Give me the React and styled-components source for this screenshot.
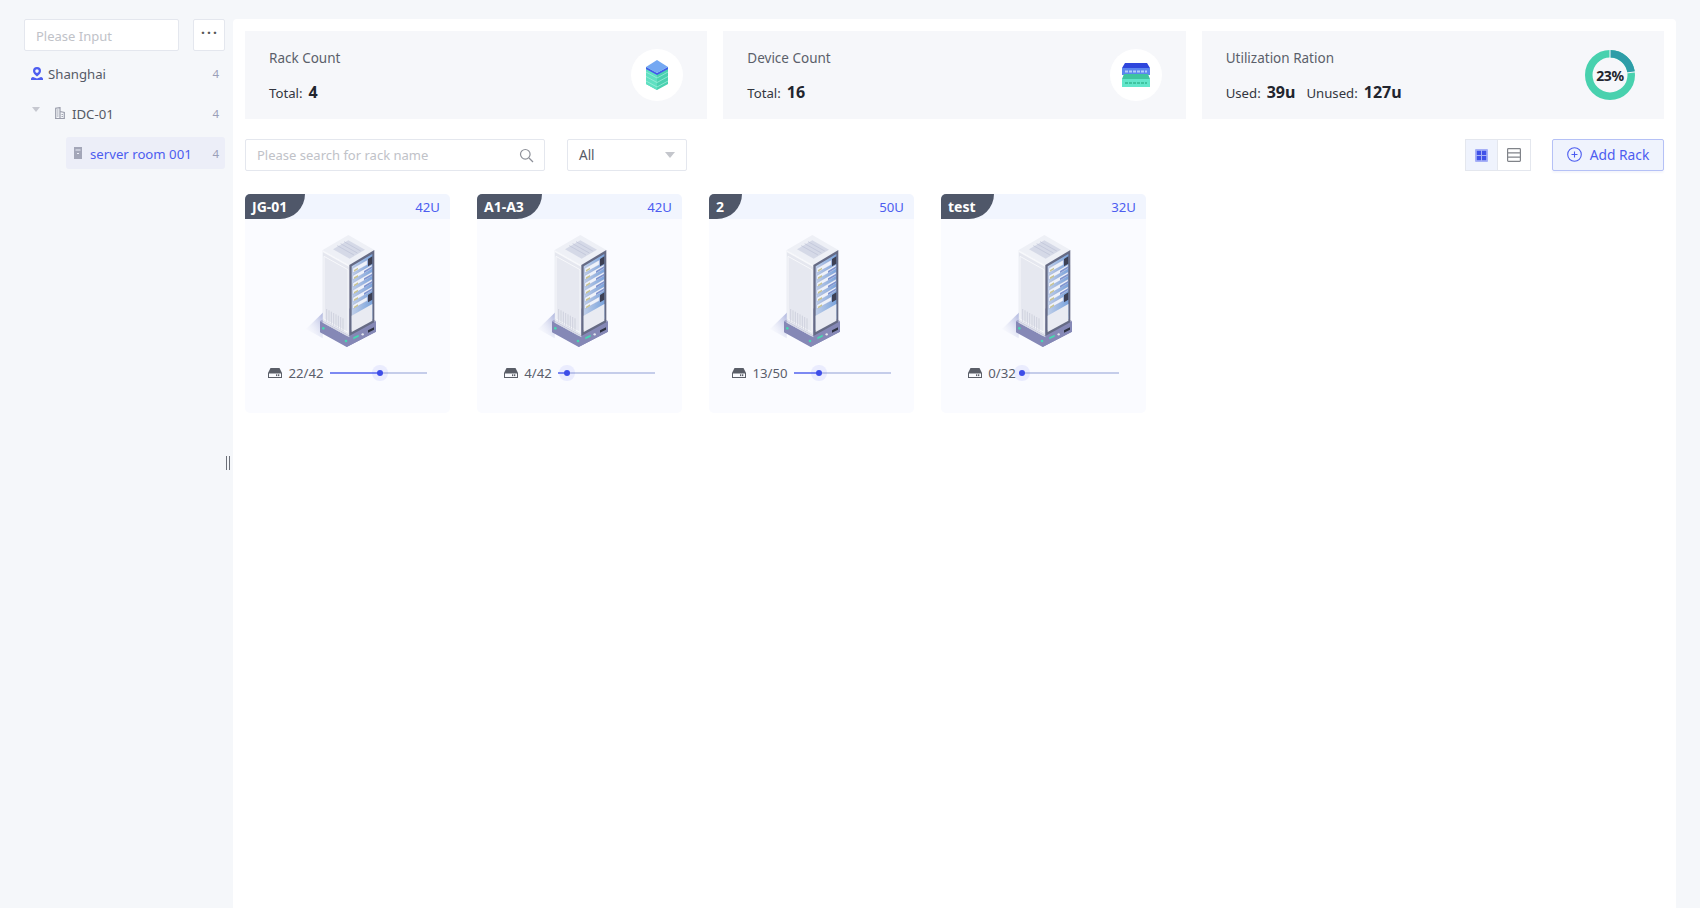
import React from 'react';
import styled, { createGlobalStyle } from 'styled-components';

const Global = createGlobalStyle`
  html, body { margin: 0; padding: 0; height: 100%; background: #f5f7fa; }
  body { font-family: "Noto Sans", "Open Sans", sans-serif; font-size: 13.2px; color: #555a66; }
  #root { height: 908px; }
  * { box-sizing: border-box; }
`;

const Page = styled.div`
  display: flex; height: 908px; width: 1700px; padding-top: 19px; background: #f5f7fa; overflow: hidden;
`;
const Side = styled.aside`
  width: 233px; flex: none; padding-left: 24px; padding-right: 8px; position: relative;
`;
const SideTop = styled.div`display: flex; gap: 14px; margin-bottom: 6px;`;
const FieldBox = styled.div`
  flex: 1; height: 32px; background: #fff; border: 1px solid #e4e7ee; border-radius: 2px;
  padding: 1px 11px 0; display: flex; align-items: center; color: #c0c2c8; font-size: 13px;
`;
const MoreBtn = styled.button`
  width: 32px; height: 32px; padding: 0 0 5px 2px; background: #fff; border: 1px solid #e4e7ee; border-radius: 2px;
  font: 700 14px "Noto Sans", sans-serif; color: #555; letter-spacing: 2px; display: flex; align-items: center; justify-content: center;
`;
const Row = styled.div`
  height: 32px; margin-top: ${p => p.$mt || 0}px; margin-left: ${p => p.$ml || 0}px; padding-left: ${p => p.$pl || 0}px; padding-right: 6px;
  display: flex; align-items: center; border-radius: 3px;
  background: ${p => (p.$active ? '#eceef8' : 'transparent')};
  color: ${p => (p.$active ? '#4d5df0' : '#555a66')}; font-size: 13.2px;
`;
const RowName = styled.span`flex: 1; margin-left: ${p => p.$ml}px; padding-top: 1px;`;
const Count = styled.span`font-size: 11.500px; color: #9a9fb8;`;
const Caret = styled.span`
  width: 0; height: 0; border-left: 4px solid transparent; border-right: 4px solid transparent; border-top: 5px solid #c6c8d0;
  margin-right: 15px; margin-top: -8px;
`;
const Handle = styled.span`
  position: absolute; left: 226px; top: 437px; width: 4px; height: 14px; border-left: 1px solid #6c7078; border-right: 1px solid #6c7078;
`;
const Main = styled.main`
  width: 1443px; flex: none; background: #fff; padding: 12px 12px 0; height: 889px; border-radius: 4px 4px 0 0;
`;
const Stats = styled.section`display: grid; grid-template-columns: repeat(3, 1fr); gap: 16px;`;
const Stat = styled.div`
  height: 88px; background: #f6f7fa; padding: 17px 24px 0; display: flex; justify-content: space-between; position: relative;
`;
const StatTitle = styled.div`color: #5b5f6a; font-size: 13.500px; line-height: 20px;`;
const StatLine = styled.div`display: flex; align-items: baseline; margin-top: 14px; line-height: 20px; color: #333640;`;
const StatLabel = styled.span`font-size: 13.200px; margin-right: 6px; margin-left: ${p => p.$ml || 0}px;`;
const StatValue = styled.b`font-size: 16px; font-weight: 700; color: #22252e;`;
const IconCircle = styled.div`
  width: 52px; height: 52px; border-radius: 50%; background: #fff; margin-top: 1px;
  display: flex; align-items: center; justify-content: center;
`;
const Donut = styled.div`position: relative; width: 50px; height: 50px; margin-top: 2px; margin-right: 5px;`;
const DonutText = styled.span`
  position: absolute; inset: 0; display: flex; align-items: center; justify-content: center;
  font-size: 14px; font-weight: 700; color: #22252e; letter-spacing: -0.3px;
`;
const Toolbar = styled.div`display: flex; align-items: center; margin-top: 20px; height: 32px;`;
const Search = styled.div`
  width: 300px; height: 32px; border: 1px solid #e4e7ee; border-radius: 2px; padding: 0 10px 0 11px;
  display: flex; align-items: center; justify-content: space-between; color: #c0c2c8; font-size: 13px;
`;
const Select = styled.div`
  width: 120px; height: 32px; margin-left: 22px; border: 1px solid #e4e7ee; border-radius: 2px; padding: 0 11px;
  display: flex; align-items: center; justify-content: space-between; color: #555a66; font-size: 13.500px;
`;
const SelectCaret = styled.span`
  width: 0; height: 0; border-left: 5px solid transparent; border-right: 5px solid transparent; border-top: 6px solid #c4c6cc;
`;
const Spacer = styled.div`flex: 1;`;
const Toggle = styled.div`display: flex; height: 32px; border: 1px solid #e4e7ee; margin-right: 21px;`;
const ToggleBtn = styled.div`
  width: ${p => (p.$on ? 31 : 33)}px; display: flex; align-items: center; justify-content: center; background: ${p => (p.$on ? '#eff3fd' : '#fff')};
  & + & { border-left: 1px solid #e4e7ee; }
`;
const AddBtn = styled.button`
  width: 112px; height: 32px; background: #eff3fd; border: 1px solid #b5c1f6; border-radius: 2px; color: #4d5df0;
  font: 13.800px "Noto Sans", sans-serif; display: flex; align-items: center; justify-content: center; gap: 8px; padding: 0 0 1px;
  box-shadow: 0 2px 2px rgba(80, 100, 200, 0.06);
`;
const Racks = styled.section`display: flex; gap: 27px; margin-top: 23px;`;
const RackCard = styled.article`width: 205px; height: 219px; background: #fafbff; border-radius: 5px; overflow: hidden;`;
const RackHead = styled.header`
  height: 25px; background: #f1f5fe; display: flex; justify-content: space-between; align-items: center; padding-right: 10px;
  color: #4d5df0; font-size: 13.200px;
`;
const RackBadge = styled.span`
  height: 25px; padding: 0 18px 0 7px; background: #4f5769; color: #fff; font-weight: 700; font-size: 14px; line-height: 25px;
  border-bottom-right-radius: 26px;
`;
const RackFigure = styled.div`padding: 6px 0 0 55px; height: 136px;`;
const Usage = styled.div`display: flex; align-items: center; justify-content: center; height: 24px; margin-top: 6px; color: #5a5e6b; font-size: 13.200px;`;
const UsageText = styled.span`margin: 0 6px;`;
const Track = styled.div`width: 97px; height: 2px; background: #c5cdea; position: relative; flex: none;`;
const Fill = styled.div`height: 2px; background: #7c89f2;`;
const Thumb = styled.span`
  position: absolute; top: 1px; width: 6px; height: 6px; border-radius: 50%; background: #3d4de8; transform: translate(-50%, -50%);
  box-shadow: 0 0 0 5px rgba(77, 93, 240, 0.09);
`;

const PinIcon = () => (
  <svg width="12" height="13" viewBox="0 0 12 13">
    <path fill="#4d5df0" fillRule="evenodd" d="M6 0a4 4 0 0 1 4 4c0 2-2 4-4 5.500C4 8 2 6 2 4a4 4 0 0 1 4-4zm0 2.300a1.800 1.800 0 1 0 0 3.600 1.800 1.800 0 0 0 0-3.600z"/>
    <path fill="#4d5df0" d="M0 13v-1c0-1 .8-1.800 2-2l4 1.500 4-1.500c1.200.2 2 1 2 2v1z"/>
  </svg>
);
const BuildingIcon = () => (
  <svg width="10" height="12" viewBox="0 0 10 12" fill="none" stroke="#9a9dab" strokeWidth="1.200">
    <path d="M.7 11.500V1.200L5 .6v10.900M5 4.500l4.300 1v6H0"/>
    <path d="M2 3h1.500M2 5h1.500M2 7h1.500M2 9h1.500M6.500 7.500H8M6.500 9.500H8" strokeWidth=".9"/>
  </svg>
);
const RoomIcon = () => (
  <svg width="8" height="12" viewBox="0 0 8 12">
    <rect width="8" height="12" fill="#a3a6b8"/>
    <rect x="1.500" y="2.500" width="5" height="1" fill="#eceef8"/>
    <rect x="3" y="6" width="2" height="1" fill="#eceef8"/>
  </svg>
);
const SearchIcon = () => (
  <svg width="15" height="15" viewBox="0 0 15 15" fill="none" stroke="#8d9099" strokeWidth="1.200">
    <circle cx="6.300" cy="6.300" r="4.800"/><path d="M10 10l4 4"/>
  </svg>
);
const GridIcon = () => (
  <svg width="13" height="13" viewBox="0 0 13 13">
    <rect width="13" height="13" rx="1" fill="#a6b0f7"/>
    <rect x="1.800" y="1.800" width="4.200" height="4.200" fill="#3f50e8"/><rect x="7" y="1.800" width="4.200" height="4.200" fill="#3f50e8"/>
    <rect x="1.800" y="7" width="4.200" height="4.200" fill="#3f50e8"/><rect x="7" y="7" width="4.200" height="4.200" fill="#3f50e8"/>
  </svg>
);
const ListIcon = () => (
  <svg width="14" height="14" viewBox="0 0 14 14" fill="none" stroke="#808389" strokeWidth="1.200">
    <rect x=".6" y=".6" width="12.800" height="12.800" rx=".8"/><path d="M1 4.800h12M1 9.200h12"/>
  </svg>
);
const PlusCircle = () => (
  <svg width="15" height="15" viewBox="0 0 15 15" fill="none" stroke="#4d5df0" strokeWidth="1.100">
    <circle cx="7.500" cy="7.500" r="6.800"/><path d="M7.500 4.500v6M4.500 7.500h6"/>
  </svg>
);
const DiskIcon = () => (
  <svg width="14" height="10" viewBox="0 0 14 10">
    <path fill="#5a5e68" d="M2.500 0h9L14 5v5H0V5z"/>
    <rect x="1" y="5.500" width="12" height="3.500" fill="#fafbff"/>
    <rect x="8" y="6.300" width="1.300" height="1.800" fill="#5a5e68"/><rect x="10" y="6.300" width="1.300" height="1.800" fill="#5a5e68"/>
  </svg>
);
const CubeIcon = () => (
  <svg width="22" height="30" viewBox="0 0 22 30">
    <path fill="#4ad1b0" d="M0 7l11 6 11-6v17l-11 6L0 24z"/>
    <path fill="#5fe0c2" d="M0 7l11 6v17L0 24z"/>
    <path d="M0 12l11 6 11-6M0 16.500l11 6 11-6M0 21l11 6 11-6" stroke="#a6efdd" strokeWidth=".7" fill="none"/>
    <path fill="#4457ec" d="M0 7l11 6 11-6v2l-11 6-11-6z"/>
    <path fill="#74a8f2" d="M11 0l11 7-11 6L0 7z"/>
  </svg>
);
const SwitchIcon = () => (
  <svg width="28" height="24" viewBox="0 0 28 24">
    <path fill="#2f46dc" d="M3 0h22l3 5H0z"/>
    <rect y="5" width="28" height="7" fill="#5c85ef"/>
    <path stroke="#b4cdf9" strokeWidth="2" strokeDasharray="3 1" d="M3 8.500h22"/>
    <path fill="#3fc4a0" d="M2 11h24l2 5H0z"/>
    <rect y="16" width="28" height="8" fill="#62e6ca"/>
    <path stroke="#3fc4a0" strokeWidth="2" strokeDasharray="3 1" d="M3 20h22"/>
  </svg>
);
const RackArt = () => (
  <svg width="100" height="130" viewBox="0 0 300 390">
    <defs>
      <linearGradient id="shade" x1="1" y1="0" x2="0" y2="1">
        <stop offset="0" stopColor="#aab1dc"/><stop offset="1" stopColor="#fafbff" stopOpacity="0"/>
      </linearGradient>
      <linearGradient id="glass" x1="0" y1="0" x2="1" y2="0">
        <stop offset="0" stopColor="#c0cfe9"/><stop offset="1" stopColor="#7aa3dc"/>
      </linearGradient>
    </defs>
    <path fill="url(#shade)" d="M70 262L18 312l50 28z"/>
    <path fill="#8588b6" d="M60 288l80 44 88-44v32l-88 46-80-44z"/>
    <path fill="#a0a3ca" d="M60 288l80 44 88-44-84-40z"/>
    <path fill="#e5e7ef" d="M68 75l80 45v212L68 288z"/>
    <path fill="#f7f8fb" d="M68 75v6l80 45v-6z"/>
    <path fill="#e6e8f0" stroke="#f7f8fb" strokeWidth="3" d="M72 94l72 40v188l-72-40z"/>
    <path fill="#eef0f6" d="M145 30l78 45-75 45-80-45z"/>
    <path fill="#d5d9e7" d="M145 46l50 28-46 27-50-28z"/>
    <path stroke="#bcc1d6" strokeWidth="2" fill="none" d="M112 62l50 28M122 56l50 28M132 50l50 28"/>
    <path fill="#666b85" d="M148 120l75-45v220l-75 40z"/>
    <path fill="url(#glass)" d="M155 124l62-37v195l-62 34z"/>
    <g fill="#eef2fa" stroke="#8e99c4" strokeWidth="1">
      <path d="M158 130l44-25v14l-44 25z"/>
      <path d="M158 152l58-33v12l-58 33z"/>
      <path d="M158 174l58-33v12l-58 33z"/>
      <path d="M158 196l58-33v12l-58 33z"/>
      <path d="M158 218l58-33v12l-58 33z"/>
      <path d="M158 240l44-25v12l-44 25z"/>
    </g>
    <g fill="#c9c48f">
      <path d="M162 135l12-7v5l-12 7zM162 157l12-7v5l-12 7zM162 179l12-7v5l-12 7zM162 201l12-7v5l-12 7zM162 223l12-7v5l-12 7zM162 245l12-7v5l-12 7z"/>
    </g>
    <g fill="#7f94cf">
      <path d="M192 138l24-14v6l-24 14zM192 160l24-14v6l-24 14zM192 182l24-14v6l-24 14zM192 204l24-14v6l-24 14z"/>
    </g>
    <path fill="#3d4054" d="M204 102l13-8v22l-13 8zM204 210l13-8v22l-13 8z"/>
    <path fill="#e9ebf2" d="M155 272l62-35v50l-62 34z"/>
    <path fill="#8588b6" d="M148 333l75-41 5-2v30l-88 46v-33z"/>
    <path fill="#d9dbe6" d="M68 288l80 44v5l-80-44z"/>
    <path fill="#2d3040" d="M204 316l18-9v7l-18 9z"/>
    <path fill="#46d9b0" d="M160 337l16-8v6l-16 8z"/>
    <circle cx="188" cy="328" r="3.500" fill="#e4e6ee"/>
    <circle cx="70" cy="310" r="4" fill="#46d9b0"/>
    <circle cx="138" cy="348" r="4" fill="#46d9b0"/>
    <path stroke="#bfc3d2" strokeWidth="1.800" fill="none" d="M80 252v38M87 256v38M94 260v38M101 264v38M108 268v38M115 272v38M122 276v38M129 280v38"/>
  </svg>
);
const DonutArt = () => {
  const r = 21.25;
  const a = (82.8 * Math.PI) / 180;
  const x = 25 + r * Math.sin(a);
  const y = 25 - r * Math.cos(a);
  return (
    <svg width="50" height="50" viewBox="0 0 50 50" fill="none">
      <circle cx="25" cy="25" r={r} stroke="#48d1ae" strokeWidth="7.500"/>
      <path d={`M25 ${25 - r}A${r} ${r} 0 0 1 ${x} ${y}`} stroke="#2e9da8" strokeWidth="7.500"/>
      <path d="M25 0v8M42 22.900l8-1" stroke="#f6f7fa" strokeWidth="1"/>
    </svg>
  );
};

const racks = [
  { name: 'JG-01', size: '42U', used: 22, total: 42 },
  { name: 'A1-A3', size: '42U', used: 4, total: 42 },
  { name: '2', size: '50U', used: 13, total: 50 },
  { name: 'test', size: '32U', used: 0, total: 32 },
];

const Rack = ({ name, size, used, total }) => {
  const pct = (used / total) * 100;
  return (
    <RackCard>
      <RackHead><RackBadge>{name}</RackBadge><span>{size}</span></RackHead>
      <RackFigure><RackArt /></RackFigure>
      <Usage>
        <DiskIcon />
        <UsageText>{used}/{total}</UsageText>
        <Track>
          <Fill style={{ width: `${pct}%` }} />
          <Thumb style={{ left: `${pct}%` }} />
        </Track>
      </Usage>
    </RackCard>
  );
};

export default function App() {
  return (
    <Page>
      <Global />
      <Side>
        <SideTop>
          <FieldBox>Please Input</FieldBox>
          <MoreBtn>···</MoreBtn>
        </SideTop>
        <Row $pl={7}><PinIcon /><RowName $ml={5}>Shanghai</RowName><Count>4</Count></Row>
        <Row $pl={8} $mt={8}><Caret /><BuildingIcon /><RowName $ml={7}>IDC-01</RowName><Count>4</Count></Row>
        <Row $active $ml={42} $pl={8} $mt={8}><RoomIcon /><RowName $ml={8}>server room 001</RowName><Count>4</Count></Row>
        <Handle />
      </Side>
      <Main>
        <Stats>
          <Stat>
            <div><StatTitle>Rack Count</StatTitle><StatLine><StatLabel>Total:</StatLabel><StatValue>4</StatValue></StatLine></div>
            <IconCircle><CubeIcon /></IconCircle>
          </Stat>
          <Stat>
            <div><StatTitle>Device Count</StatTitle><StatLine><StatLabel>Total:</StatLabel><StatValue>16</StatValue></StatLine></div>
            <IconCircle><SwitchIcon /></IconCircle>
          </Stat>
          <Stat>
            <div>
              <StatTitle>Utilization Ration</StatTitle>
              <StatLine>
                <StatLabel>Used:</StatLabel><StatValue>39u</StatValue>
                <StatLabel $ml={11}>Unused:</StatLabel><StatValue>127u</StatValue>
              </StatLine>
            </div>
            <Donut><DonutArt /><DonutText>23%</DonutText></Donut>
          </Stat>
        </Stats>
        <Toolbar>
          <Search>Please search for rack name<SearchIcon /></Search>
          <Select>All<SelectCaret /></Select>
          <Spacer />
          <Toggle>
            <ToggleBtn $on><GridIcon /></ToggleBtn>
            <ToggleBtn><ListIcon /></ToggleBtn>
          </Toggle>
          <AddBtn><PlusCircle />Add Rack</AddBtn>
        </Toolbar>
        <Racks>
          {racks.map(r => <Rack key={r.name} {...r} />)}
        </Racks>
      </Main>
    </Page>
  );
}
